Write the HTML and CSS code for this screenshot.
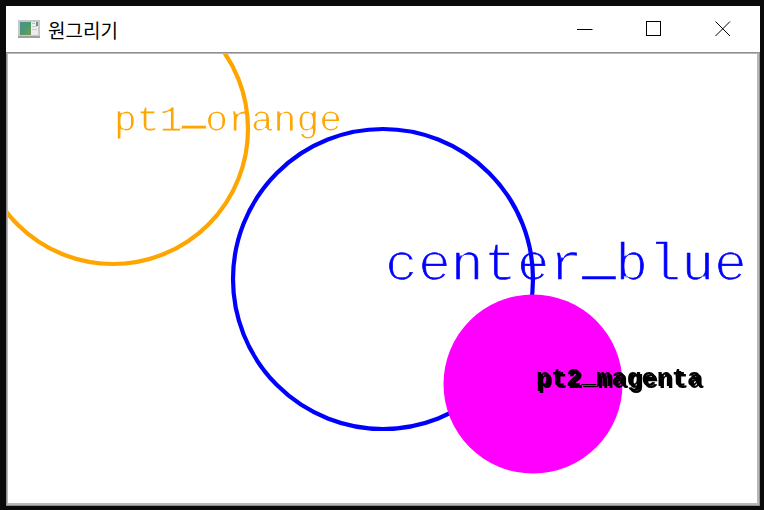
FILE: index.html
```html
<!DOCTYPE html>
<html lang="ko">
<head>
<meta charset="utf-8">
<title>원그리기</title>
<link rel="stylesheet" href="styles.css">
</head>
<body>
<div class="window">
  <header class="titlebar">
    <svg class="app-icon" width="22" height="18" viewBox="0 0 22 18">
      <defs>
        <linearGradient id="pic" x1="0" y1="0" x2="1" y2="1">
          <stop offset="0" stop-color="#4f8f9a"/>
          <stop offset="0.5" stop-color="#4a9a6e"/>
          <stop offset="1" stop-color="#7a9a50"/>
        </linearGradient>
      </defs>
      <rect width="22" height="18" fill="#c8c8c8"/>
      <rect x="0" y="16" width="22" height="2" fill="#a0a0a0"/>
      <rect x="2" y="2" width="11" height="13" fill="url(#pic)"/>
      <rect x="13" y="2" width="7" height="13" fill="#ececec"/>
      <rect x="14" y="3" width="3" height="1" fill="#bbbbbb"/>
      <rect x="14" y="6" width="5" height="1" fill="#cccccc"/>
      <rect x="14" y="9" width="5" height="1" fill="#cccccc"/>
      <rect x="18" y="2" width="2" height="4" fill="#5a9a80"/>
    </svg>
    <span class="title">원그리기</span>
    <div class="controls">
      <button class="ctl" aria-label="최소화"><svg width="16" height="16" viewBox="0 0 16 16"><path d="M0 8.5H15.5" stroke="#000" fill="none"/></svg></button>
      <button class="ctl" aria-label="최대화"><svg width="16" height="16" viewBox="0 0 16 16"><rect x="0.5" y="0.5" width="14" height="14" stroke="#000" fill="none"/></svg></button>
      <button class="ctl" aria-label="닫기"><svg width="16" height="16" viewBox="0 0 16 16"><path d="M0.5 0.5L15 15M15 0.5L0.5 15" stroke="#000" fill="none"/></svg></button>
    </div>
  </header>
  <main class="canvas-frame">
    <svg class="canvas" viewBox="8 54 749 449">
      <defs>
        <filter id="thin-lg" x="-5%" y="-20%" width="110%" height="140%"><feMorphology operator="erode" radius="1"/></filter>
        <filter id="thin-md" x="-5%" y="-20%" width="110%" height="140%"><feMorphology operator="erode" radius="0.6"/></filter>
        <filter id="offset-shadow" x="-5%" y="-20%" width="110%" height="140%"><feDropShadow dx="2" dy="2" stdDeviation="0" flood-color="#000"/></filter>
      </defs>
      <circle cx="113" cy="129" r="135" class="c-orange"/>
      <circle cx="383" cy="279" r="150" class="c-blue"/>
      <circle cx="533" cy="384" r="89.5" class="c-magenta"/>
      <text x="114" y="131" class="t t-orange" textLength="228" lengthAdjust="spacingAndGlyphs" filter="url(#thin-md)">pt1<tspan dy="-7" class="us-orange">_</tspan><tspan dy="7">orange</tspan></text>
      <text x="385" y="280" class="t t-blue" textLength="362" lengthAdjust="spacingAndGlyphs" filter="url(#thin-lg)">center<tspan dy="-7" class="us-blue">_</tspan><tspan dy="7">blue</tspan></text>
      <text x="536" y="386" class="t t-pt2" textLength="166" lengthAdjust="spacingAndGlyphs" filter="url(#offset-shadow)">pt2<tspan dy="-4">_</tspan><tspan dy="4">magenta</tspan></text>
    </svg>
  </main>
</div>
</body>
</html>
```
FILE: styles.css
```css
* { box-sizing: border-box; }
html, body { margin: 0; padding: 0; }
body { width: 764px; height: 510px; overflow: hidden; background: #0a0a0a; }
.window {
  width: 764px;
  height: 510px;
  padding: 6px 4px 4px 6px;
  display: flex;
  flex-direction: column;
  background: #0a0a0a;
}
.titlebar {
  height: 46px;
  flex: none;
  display: flex;
  align-items: center;
  background: #fff;
  padding-left: 12px;
}
.app-icon { flex: none; margin-top: -1px; }
.title {
  margin-left: 8px;
  font: 19px "Noto Sans CJK KR", "Noto Sans", sans-serif;
  color: #000;
}
.controls { margin-left: auto; display: flex; margin-right: 3px; }
.ctl {
  width: 69px;
  height: 46px;
  padding: 0;
  border: 0;
  background: none;
  display: flex;
  align-items: center;
  justify-content: center;
}
.canvas-frame {
  flex: 1;
  background: #fff;
  border: 1px solid #8f8f8f;
  overflow: hidden;
}
.canvas {
  display: block;
  width: 752px;
  height: 452px;
  border-style: solid;
  border-color: #b8b8b8;
  border-width: 1px 2px 2px 1px;
}
.c-orange { fill: none; stroke: #ffa500; stroke-width: 4.2; }
.c-blue { fill: none; stroke: #0000ff; stroke-width: 4.2; }
.c-magenta { fill: #ff00ff; }
.t { font-family: "Liberation Mono", monospace; }
.t-orange { font-size: 37px; fill: #ffa500; stroke: #ffa500; stroke-width: 1.2; }
.t-blue { font-size: 54px; fill: #0000ff; stroke: #0000ff; stroke-width: 0.7; }
.us-orange { stroke-width: 3; }
.us-blue { stroke-width: 2.5; }
.t-pt2 { font-size: 25px; font-weight: bold; fill: #000; }
```
